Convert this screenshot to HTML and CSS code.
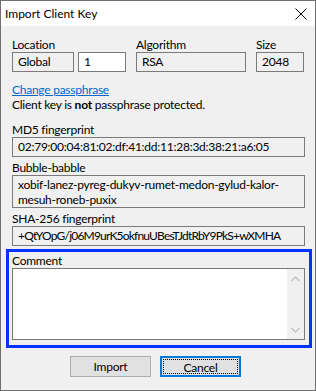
FILE: index.html
```html
<!DOCTYPE html>
<html>
<head>
<meta charset="utf-8">
<link rel="stylesheet" href="styles.css">
</head>
<body>
<div class="window">
  <div class="titlebar">
    <span class="title">Import Client Key</span>
    <svg class="close" width="12" height="12" viewBox="0 0 12 12"><path d="M0.5 0.5 L11.5 11.5 M11.5 0.5 L0.5 11.5" stroke="#000" stroke-width="1" fill="none"/></svg>
  </div>
  <div class="content">
    <div class="toprow">
      <div class="field f-loc">
        <div class="label">Location</div>
        <div class="pair">
          <div class="box ro w-global">Global</div>
          <div class="box white w-num">1</div>
        </div>
      </div>
      <div class="field f-alg">
        <div class="label">Algorithm</div>
        <div class="box ro w-alg">RSA</div>
      </div>
      <div class="field f-size">
        <div class="label">Size</div>
        <div class="box ro w-size">2048</div>
      </div>
    </div>

    <div class="pass">
      <a class="link" href="#">Change passphrase</a>
      <div>Client key is <b>not</b> passphrase protected.</div>
    </div>

    <div class="label lbl-md5">MD5 fingerprint</div>
    <div class="box ro wide">02:79:00:04:81:02:df:41:dd:11:28:3d:38:21:a6:05</div>

    <div class="label lbl-next">Bubble-babble</div>
    <div class="box ro wide multi">xobif-lanez-pyreg-dukyv-rumet-medon-gylud-kalor-<br>mesuh-roneb-puxix</div>

    <div class="label lbl-next">SHA-256 fingerprint</div>
    <div class="box ro wide tight">+QtYOpG/j06M9urK5okfnuUBesTJdtRbY9PkS+wXMHA</div>

    <div class="focusgroup">
      <div class="label">Comment</div>
      <div class="textarea">
        <div class="ta-body"></div>
        <div class="scroll">
          <svg width="9" height="6" viewBox="0 0 9 6"><path d="M0.5 5 L4.5 1 L8.5 5" stroke="#c2c2c2" stroke-width="1.4" fill="none"/></svg>
          <svg width="9" height="6" viewBox="0 0 9 6"><path d="M0.5 1 L4.5 5 L8.5 1" stroke="#c2c2c2" stroke-width="1.4" fill="none"/></svg>
        </div>
      </div>
    </div>

    <div class="buttons">
      <div class="btn">Import</div>
      <div class="btn default"><span class="focusring">Cancel</span></div>
    </div>
  </div>
</div>
</body>
</html>
```

FILE: styles.css
```css
* { box-sizing: border-box; }
html, body { margin: 0; padding: 0; background: #f0f0f0; }
body {
  font-family: Lato, "Noto Sans", sans-serif;
  font-size: 12px;
  letter-spacing: -0.25px;
  color: #000;
}
.window {
  width: 316px;
  height: 391px;
  border: 1px solid #6f6f6f;
  background: #f0f0f0;
  display: flex;
  flex-direction: column;
}
.titlebar {
  height: 25px;
  background: #fff;
  display: flex;
  align-items: center;
  justify-content: space-between;
  padding: 0 8px 0 4px;
  flex: none;
}
.title { font-size: 12px; line-height: 16px; letter-spacing: 0; }
.close { display: block; }
.content {
  padding: 11px 11px 0 11px;
  display: flex;
  flex-direction: column;
}
.label { line-height: 15px; height: 15px; white-space: nowrap; }
.box {
  height: 20px;
  border: 1px solid #7a7a7a;
  line-height: 18px;
  padding: 0 5px;
  white-space: nowrap;
  overflow: hidden;
}
.ro { background: #f0f0f0; }
.white { background: #fff; }
.toprow { display: flex; }
.pair { display: flex; gap: 4px; }
.f-alg { margin-left: 10px; }
.f-size { margin-left: 10px; }
.w-global { width: 62px; }
.w-num { width: 48px; }
.w-alg { width: 110px; }
.w-size { width: 48px; }
.pass { margin-top: 10px; line-height: 15px; }
.link { color: #0066cc; text-decoration: underline; }
.lbl-md5 { margin-top: 10px; }
.lbl-next { margin-top: 3px; }
.wide { width: 293px; }
.tight { letter-spacing: -0.8px; }
.multi { height: 33px; line-height: 15px; padding-top: 1px; }
.focusgroup {
  margin: 3px -6px 0 -6px;
  width: 306px;
  height: 99px;
  border: 3px solid #0033ff;
  padding: 1px 0 0 3px;
}
.textarea {
  width: 293px;
  height: 72px;
  border: 1px solid #7a7a7a;
  background: #fff;
  display: flex;
}
.ta-body { flex: 1; }
.scroll {
  width: 17px;
  background: #f0f0f0;
  display: flex;
  flex-direction: column;
  justify-content: space-between;
  align-items: center;
  padding: 7px 0 6px;
}
.scroll svg { display: block; }
.buttons {
  display: flex;
  justify-content: center;
  gap: 9px;
  margin-top: 8px;
  padding-right: 5px;
}
.btn {
  width: 81px;
  height: 21px;
  border: 1px solid #adadad;
  background: #e1e1e1;
  text-align: center;
  line-height: 19px;
}
.btn.default {
  border: 2px solid #0078d7;
  padding: 1px;
  line-height: 15px;
}
.focusring {
  display: block;
  height: 100%;
  border: 1px dotted #000;
}
```
